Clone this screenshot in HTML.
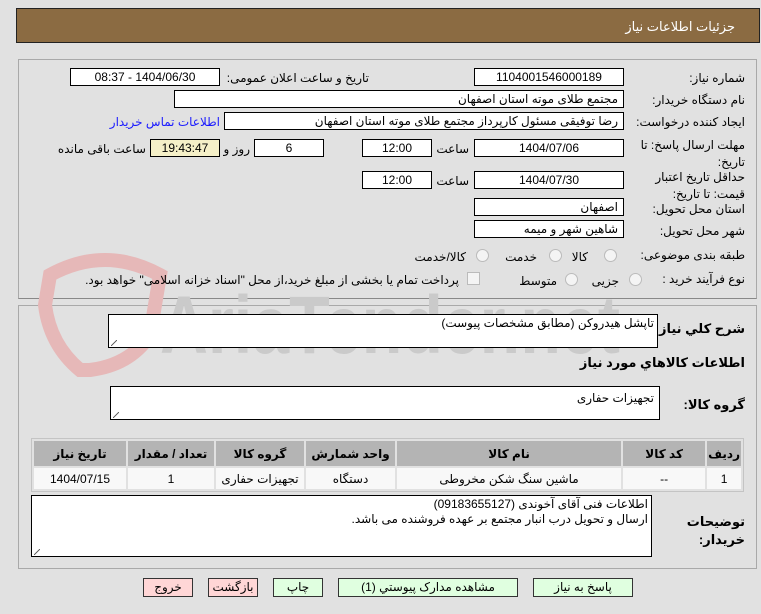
<!DOCTYPE html>
<html><head><meta charset="utf-8"><style>
body{margin:0;width:761px;height:614px;background:#e1e1e1;font-family:Tahoma,"Liberation Sans","DejaVu Sans",sans-serif;font-size:12px;color:#000;position:relative;overflow:hidden}
.a{position:absolute}
.box{position:absolute;background:#fff;border:1px solid #000;box-sizing:border-box;direction:rtl;padding:0 5px;line-height:16px;font-size:12px;white-space:nowrap}
.c{text-align:center;padding:0}
.l{position:absolute;direction:rtl;white-space:nowrap;font-size:12px}
.b{font-weight:bold;font-size:13px}
.rad{position:absolute;width:11px;height:11px;border:1px solid #bbb;border-radius:50%;background:#f4f4f4}
table{border-collapse:separate;border-spacing:2px;background:#e1e1e1;border:1px solid #c4c4c4}
td{font-size:12px;text-align:center;height:21px;padding:0}
th{background:#b4b4b4;height:23px;font-size:12px}
td{background:#f8f8f8}
.btn{position:absolute;top:578px;height:19px;border:1px solid #333;box-sizing:border-box;text-align:center;line-height:17px;font-size:12px;direction:rtl}
.g{background:#e0ffe0}.p{background:#ffd6d6}
.rz{position:absolute;right:auto;bottom:1px;left:2px;width:6px;height:6px;background:linear-gradient(135deg,transparent 45%,#666 45%,#666 55%,transparent 55%)}
</style></head><body>
<div class="a" style="left:16px;top:8px;width:744px;height:35px;background:#8b6b42;border:1px solid #222;box-sizing:border-box"></div>
<div class="l" style="right:26px;top:19px;color:#fff;font-size:13px">جزئیات اطلاعات نیاز</div>

<div class="a" style="left:18px;top:59px;width:739px;height:240px;border:1px solid #a9a9a9;border-bottom-color:#888;box-sizing:border-box"></div>
<div class="a" style="left:18px;top:305px;width:739px;height:264px;border:1px solid #a9a9a9;box-sizing:border-box"></div>

<!-- watermark -->
<svg class="a" style="left:20px;top:245px" width="720" height="140">
<path d="M30 30 Q85 0 140 30 L130 90 Q110 120 70 125 L60 125 Q30 100 25 60 Z" fill="none" stroke="#e6b8b8" stroke-width="14"/>
<text x="140" y="108" font-family="Liberation Sans" font-size="82" fill="#cacaca" font-weight="bold" textLength="460" lengthAdjust="spacingAndGlyphs">AriaTender.net</text>
</svg>

<div class="l" style="right:16px;top:71px">شماره نیاز:</div>
<div class="box c" style="left:474px;top:68px;width:150px;height:18px">1104001546000189</div>
<div class="l" style="right:392px;top:71px">تاریخ و ساعت اعلان عمومی:</div>
<div class="box c" style="left:70px;top:68px;width:150px;height:18px">1404/06/30 - 08:37</div>

<div class="l" style="right:16px;top:93px">نام دستگاه خریدار:</div>
<div class="box" style="left:174px;top:90px;width:450px;height:18px">مجتمع طلای موته استان اصفهان</div>

<div class="l" style="right:16px;top:115px">ایجاد کننده درخواست:</div>
<div class="box" style="left:224px;top:112px;width:400px;height:18px">رضا توفیقی مسئول کارپرداز مجتمع طلای موته استان اصفهان</div>
<div class="l" style="right:541px;top:115px;color:#1a1aff">اطلاعات تماس خریدار</div>

<div class="l" style="right:16px;top:137px;line-height:17px">مهلت ارسال پاسخ: تا<br>تاریخ:</div>
<div class="box c" style="left:474px;top:139px;width:150px;height:18px">1404/07/06</div>
<div class="l" style="right:292px;top:142px">ساعت</div>
<div class="box c" style="left:362px;top:139px;width:70px;height:18px">12:00</div>
<div class="box c" style="left:254px;top:139px;width:70px;height:18px">6</div>
<div class="l" style="right:511px;top:142px">روز و</div>
<div class="box c" style="left:150px;top:139px;width:70px;height:18px;background:#f5f0c8">19:43:47</div>
<div class="l" style="right:615px;top:142px">ساعت باقی مانده</div>

<div class="l" style="right:16px;top:169px;line-height:17px">حداقل تاریخ اعتبار<br>قیمت: تا تاریخ:</div>
<div class="box c" style="left:474px;top:171px;width:150px;height:18px">1404/07/30</div>
<div class="l" style="right:292px;top:174px">ساعت</div>
<div class="box c" style="left:362px;top:171px;width:70px;height:18px">12:00</div>

<div class="l" style="right:16px;top:202px">استان محل تحویل:</div>
<div class="box" style="left:474px;top:198px;width:150px;height:18px">اصفهان</div>
<div class="l" style="right:16px;top:224px">شهر محل تحویل:</div>
<div class="box" style="left:474px;top:220px;width:150px;height:18px">شاهین شهر و میمه</div>

<div class="l" style="right:16px;top:248px">طبقه بندی موضوعی:</div>
<div class="rad" style="left:604px;top:249px"></div><div class="l" style="right:173px;top:250px">کالا</div>
<div class="rad" style="left:549px;top:249px"></div><div class="l" style="right:224px;top:250px">خدمت</div>
<div class="rad" style="left:476px;top:249px"></div><div class="l" style="right:295px;top:250px">کالا/خدمت</div>

<div class="l" style="right:16px;top:272px">نوع فرآیند خرید :</div>
<div class="rad" style="left:629px;top:273px"></div><div class="l" style="right:142px;top:274px">جزیی</div>
<div class="rad" style="left:565px;top:273px"></div><div class="l" style="right:204px;top:274px">متوسط</div>
<div class="a" style="left:467px;top:272px;width:11px;height:11px;border:1px solid #bbb;background:#f4f4f4"></div>
<div class="l" style="right:302px;top:273px">پرداخت تمام یا بخشی از مبلغ خرید،از محل "اسناد خزانه اسلامی" خواهد بود.</div>

<div class="l b" style="right:16px;top:321px">شرح کلي نياز:</div>
<div class="box" style="left:108px;top:314px;width:550px;height:34px;padding-right:3px">تاپشل هیدروکن (مطابق مشخصات پیوست)<span class="rz"></span></div>
<div class="l b" style="right:16px;top:355px">اطلاعات کالاهاي مورد نياز</div>
<div class="l b" style="right:16px;top:397px">گروه کالا:</div>
<div class="box" style="left:110px;top:386px;width:550px;height:34px;padding-top:3px">تجهیزات حفاری<span class="rz"></span></div>

<table class="a" style="left:31px;top:438px;width:713px;direction:rtl">
<tr><th style="width:26px">رديف</th><th style="width:80px">کد کالا</th><th>نام کالا</th><th style="width:87px">واحد شمارش</th><th style="width:86px">گروه کالا</th><th style="width:84px">تعداد / مقدار</th><th style="width:90px">تاريخ نياز</th></tr>
<tr><td>1</td><td>--</td><td>ماشین سنگ شکن مخروطی</td><td>دستگاه</td><td>تجهیزات حفاری</td><td>1</td><td>1404/07/15</td></tr>
</table>

<div class="l b" style="right:16px;top:513px;line-height:18px">توضیحات<br>خریدار:</div>
<div class="box" style="left:31px;top:495px;width:621px;height:62px;padding-right:3px;line-height:15px;padding-top:1px">اطلاعات فنی آقای آخوندی (09183655127)<br>ارسال و تحویل درب انبار مجتمع بر عهده فروشنده می باشد.<span class="rz"></span></div>

<div class="btn g" style="left:533px;width:100px">پاسخ به نیاز</div>
<div class="btn g" style="left:338px;width:180px">مشاهده مدارک پیوستي (1)</div>
<div class="btn g" style="left:273px;width:50px">چاپ</div>
<div class="btn p" style="left:208px;width:50px">بازگشت</div>
<div class="btn p" style="left:143px;width:50px">خروج</div>
</body></html>
